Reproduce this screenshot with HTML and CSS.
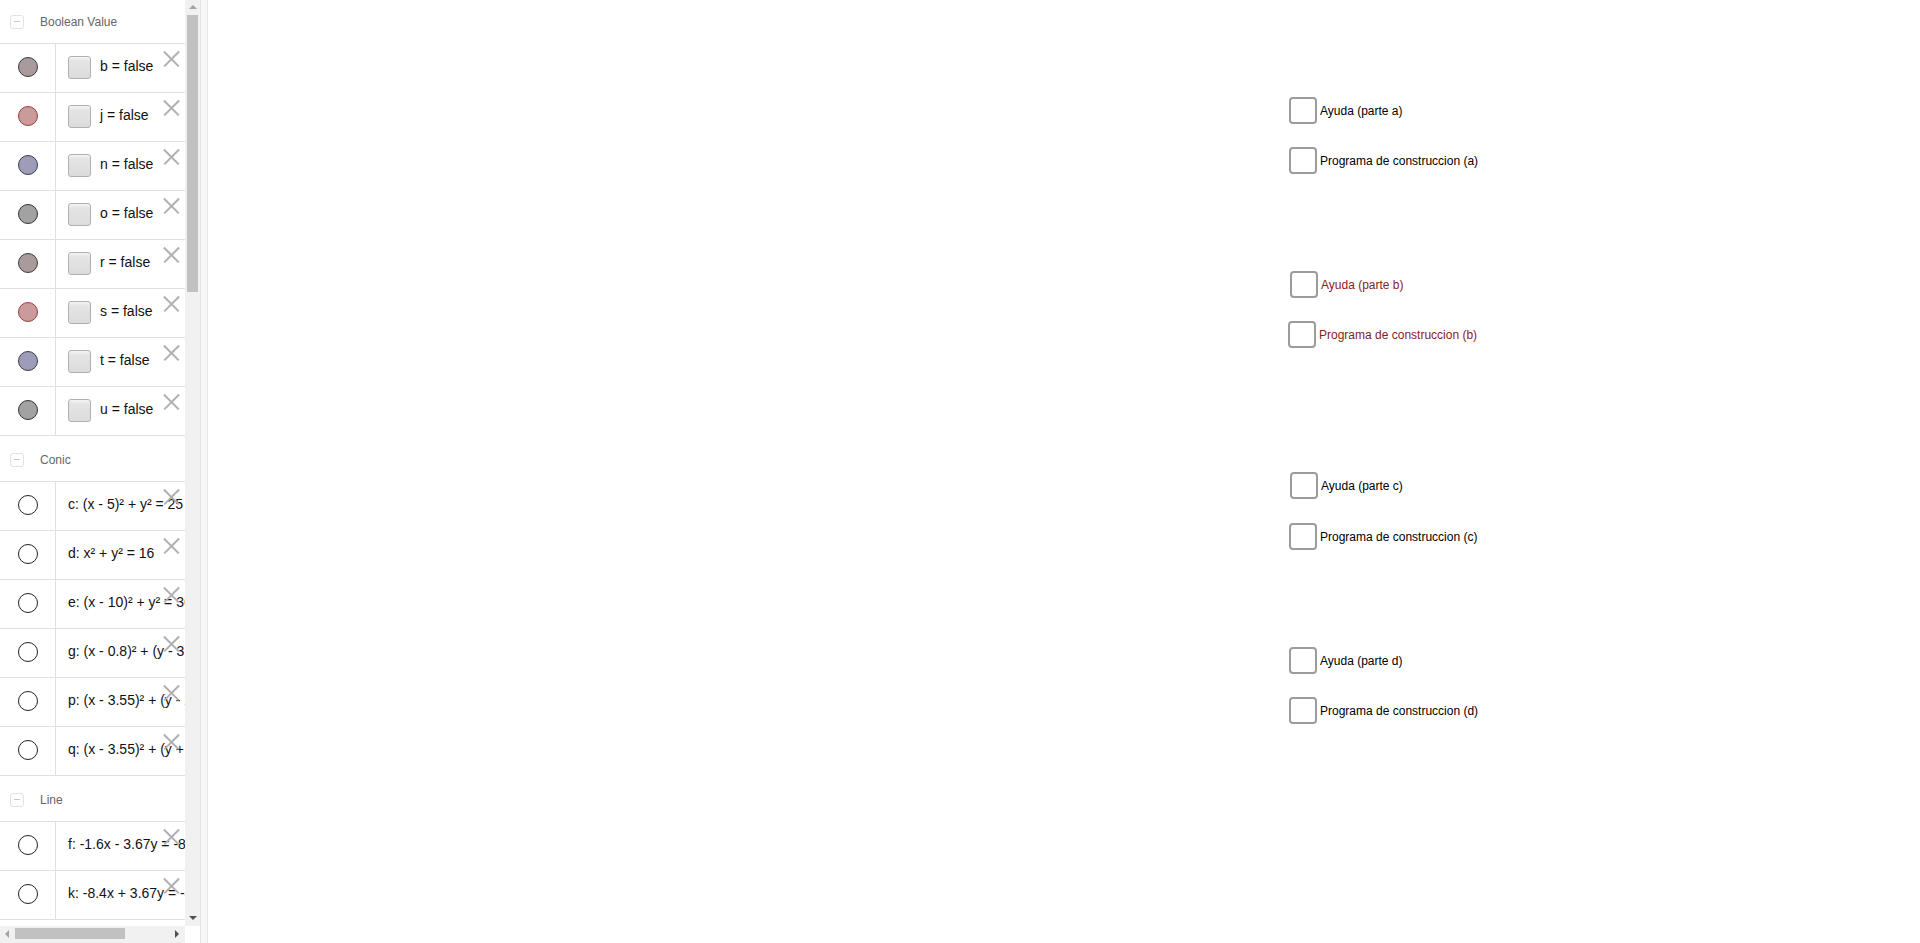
FILE: index.html
```html
<!DOCTYPE html>
<html>
<head>
<meta charset="utf-8">
<link rel="stylesheet" href="styles.css">
</head>
<body>
<div class="sidebar">
  <div class="list">
    <div class="inner">
      <div class="group"><span class="minus"></span><span class="gname">Boolean Value</span></div>
      <div class="row"><div class="mark"><span class="dot dot-brown"></span></div><div class="val"><span class="cb"></span>b = false</div><span class="x"></span></div>
      <div class="row"><div class="mark"><span class="dot dot-red"></span></div><div class="val"><span class="cb"></span>j = false</div><span class="x"></span></div>
      <div class="row"><div class="mark"><span class="dot dot-blue"></span></div><div class="val"><span class="cb"></span>n = false</div><span class="x"></span></div>
      <div class="row"><div class="mark"><span class="dot dot-gray"></span></div><div class="val"><span class="cb"></span>o = false</div><span class="x"></span></div>
      <div class="row"><div class="mark"><span class="dot dot-brown"></span></div><div class="val"><span class="cb"></span>r = false</div><span class="x"></span></div>
      <div class="row"><div class="mark"><span class="dot dot-red"></span></div><div class="val"><span class="cb"></span>s = false</div><span class="x"></span></div>
      <div class="row"><div class="mark"><span class="dot dot-blue"></span></div><div class="val"><span class="cb"></span>t = false</div><span class="x"></span></div>
      <div class="row"><div class="mark"><span class="dot dot-gray"></span></div><div class="val"><span class="cb"></span>u = false</div><span class="x"></span></div>

      <div class="group"><span class="minus"></span><span class="gname">Conic</span></div>
      <div class="row"><div class="mark"><span class="dot dot-empty"></span></div><div class="val">c: (x - 5)² + y² = 25</div><span class="x"></span></div>
      <div class="row"><div class="mark"><span class="dot dot-empty"></span></div><div class="val">d: x² + y² = 16</div><span class="x"></span></div>
      <div class="row"><div class="mark"><span class="dot dot-empty"></span></div><div class="val">e: (x - 10)² + y² = 36</div><span class="x"></span></div>
      <div class="row"><div class="mark"><span class="dot dot-empty"></span></div><div class="val">g: (x - 0.8)² + (y - 3.67)² = 16</div><span class="x"></span></div>
      <div class="row"><div class="mark"><span class="dot dot-empty"></span></div><div class="val">p: (x - 3.55)² + (y - 2.08)² = 9</div><span class="x"></span></div>
      <div class="row"><div class="mark"><span class="dot dot-empty"></span></div><div class="val">q: (x - 3.55)² + (y + 2.08)² = 9</div><span class="x"></span></div>

      <div class="group"><span class="minus"></span><span class="gname">Line</span></div>
      <div class="row"><div class="mark"><span class="dot dot-empty"></span></div><div class="val">f: -1.6x - 3.67y = -8</div><span class="x"></span></div>
      <div class="row"><div class="mark"><span class="dot dot-empty"></span></div><div class="val">k: -8.4x + 3.67y = -42</div><span class="x"></span></div>
    </div>
  </div>
  <div class="vscroll"><span class="arr arr-up"></span><span class="vthumb"></span><span class="arr arr-down"></span></div>
  <div class="hscroll"><span class="arr arr-left"></span><span class="hthumb"></span><span class="arr arr-right"></span></div>
  <div class="corner"></div>
</div>
<div class="splitter"></div>
<div class="canvas">
  <div class="check" style="left:1081px;top:97px"><span class="box"></span><span class="lbl">Ayuda (parte a)</span></div>
  <div class="check" style="left:1081px;top:147px"><span class="box"></span><span class="lbl">Programa de construccion (a)</span></div>
  <div class="check red" style="left:1082px;top:271px"><span class="box"></span><span class="lbl">Ayuda (parte b)</span></div>
  <div class="check red" style="left:1080px;top:321px"><span class="box"></span><span class="lbl">Programa de construccion (b)</span></div>
  <div class="check" style="left:1082px;top:472px"><span class="box"></span><span class="lbl">Ayuda (parte c)</span></div>
  <div class="check" style="left:1081px;top:523px"><span class="box"></span><span class="lbl">Programa de construccion (c)</span></div>
  <div class="check" style="left:1081px;top:647px"><span class="box"></span><span class="lbl">Ayuda (parte d)</span></div>
  <div class="check" style="left:1081px;top:697px"><span class="box"></span><span class="lbl">Programa de construccion (d)</span></div>
</div>
</body>
</html>
```
FILE: styles.css
```css
html, body {
  margin: 0;
  padding: 0;
  width: 1920px;
  height: 943px;
  overflow: hidden;
  background: #fff;
}
body {
  display: flex;
  font-family: "Liberation Sans", Arial, sans-serif;
}
.sidebar {
  width: 200px;
  height: 943px;
  display: grid;
  grid-template-columns: 185px 15px;
  grid-template-rows: 926px 17px;
  flex: none;
}
.list {
  overflow: hidden;
  position: relative;
  background: #fff;
}
.inner {
  margin-top: -2px;
}
.group {
  height: 45px;
  border-bottom: 1px solid #e0e0e0;
  display: flex;
  align-items: center;
  box-sizing: content-box;
}
.minus {
  width: 14px;
  height: 14px;
  margin-left: 10px;
  margin-top: 2px;
  border: 1px solid #e2e2e2;
  border-radius: 3px;
  box-sizing: border-box;
  position: relative;
}
.minus::after {
  content: "";
  position: absolute;
  left: 3px;
  right: 3px;
  top: 5px;
  height: 1px;
  background: #c8c8c8;
}
.gname {
  margin-left: 16px;
  margin-top: 2px;
  font-size: 12px;
  color: #666;
}
.row {
  height: 48px;
  border-bottom: 1px solid #e0e0e0;
  display: flex;
  position: relative;
}
.mark {
  width: 56px;
  flex: none;
  border-right: 1px solid #e0e0e0;
  display: flex;
  align-items: center;
  justify-content: center;
  box-sizing: border-box;
  padding-bottom: 3px;
}
.dot {
  width: 20px;
  height: 20px;
  border-radius: 50%;
  box-sizing: border-box;
  border: 1.5px solid #333;
}
.dot-brown { background: #a99a9b; border-color: #3a3a3a; }
.dot-red { background: #c99c9c; border-color: #a33a3a; }
.dot-blue { background: #9d9db9; border-color: #3a3a4a; }
.dot-gray { background: #a2a2a2; border-color: #333; }
.dot-empty { background: #fff; border-color: #222; border-width: 1.5px; }
.val {
  display: flex;
  align-items: center;
  white-space: nowrap;
  padding-left: 12px;
  padding-bottom: 4px;
  font-size: 14px;
  color: #111;
}
.cb {
  width: 23px;
  height: 23px;
  margin-right: 9px;
  margin-top: 3px;
  border: 1px solid #b0b0b0;
  border-radius: 3px;
  box-sizing: border-box;
  background: linear-gradient(#f4f4f4 0, #e4e4e4 20%, #dcdcdc 100%);
  flex: none;
}
.x {
  position: absolute;
  left: 163px;
  top: 7px;
  width: 16px;
  height: 16px;
}
.x::before, .x::after {
  content: "";
  position: absolute;
  left: -2px;
  top: 7px;
  width: 21px;
  height: 1.5px;
  background: #b0b0b0;
  transform: rotate(45deg);
}
.x::after {
  transform: rotate(-45deg);
}
.vscroll {
  background: #f1f1f1;
  position: relative;
}
.vthumb {
  position: absolute;
  left: 2px;
  right: 2px;
  top: 15px;
  height: 277px;
  background: #c1c1c1;
}
.hscroll {
  background: #f1f1f1;
  position: relative;
}
.hthumb {
  position: absolute;
  left: 15px;
  width: 110px;
  top: 2px;
  bottom: 4px;
  background: #c1c1c1;
}
.corner {
  background: #fff;
}
.arr {
  position: absolute;
  width: 0;
  height: 0;
}
.arr-up {
  left: 4px;
  top: 5px;
  border-left: 4px solid transparent;
  border-right: 4px solid transparent;
  border-bottom: 4px solid #a3a3a3;
}
.arr-down {
  left: 4px;
  bottom: 6px;
  border-left: 4px solid transparent;
  border-right: 4px solid transparent;
  border-top: 4px solid #505050;
}
.arr-left {
  left: 5px;
  top: 4px;
  border-top: 4px solid transparent;
  border-bottom: 4px solid transparent;
  border-right: 4px solid #a3a3a3;
}
.arr-right {
  left: 175px;
  top: 4px;
  border-top: 4px solid transparent;
  border-bottom: 4px solid transparent;
  border-left: 4px solid #505050;
}
.splitter {
  width: 6px;
  flex: none;
  background: #f7f7f7;
  border-left: 1px solid #e2e2e2;
  border-right: 1px solid #e8e8e8;
}
.canvas {
  flex: 1;
  position: relative;
  background: #fff;
}
.check {
  position: absolute;
  display: flex;
  align-items: center;
  white-space: nowrap;
}
.box {
  width: 28px;
  height: 27px;
  box-sizing: border-box;
  border: 2px solid #9c9c9c;
  border-radius: 4px;
  background: #fff;
  flex: none;
}
.lbl {
  margin-left: 3px;
  font-size: 12px;
  color: #000;
}
.red .lbl {
  color: #8c1a1a;
}
```
